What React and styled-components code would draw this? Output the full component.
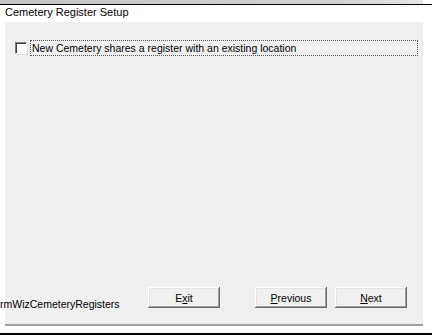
import React, { useState } from "react";
import styled, { createGlobalStyle } from "styled-components";

const GlobalStyle = createGlobalStyle`
  html, body {
    margin: 0;
    padding: 0;
    background: #ffffff;
  }
  body {
    font-family: "Liberation Sans", Arial, sans-serif;
    font-size: 10.5px;
    color: #000;
  }
`;

const Window = styled.div`
  width: 432px;
  height: 335px;
  display: flex;
  flex-direction: column;
  overflow: hidden;
  background: #ffffff;
`;

const TopStrip = styled.div`
  width: 423px;
  height: 4px;
  background: linear-gradient(to right, #c4c4c4, #d2d2d2 80%, #e6e6e6);
`;

const Rule = styled.div`
  width: 432px;
  height: ${({ thick }) => (thick ? "2px" : "1px")};
  background: #000000;
`;

const Title = styled.div`
  height: 17px;
  line-height: 15px;
  padding-left: 5px;
  font-size: 11px;
`;

const Panel = styled.div`
  margin-left: 5px;
  width: 418px;
  height: 302px;
  background: #f0f0f0;
  border-bottom: 2px solid #a0a0a0;
  display: flex;
  flex-direction: column;
`;

const CheckRow = styled.label`
  display: flex;
  align-items: center;
  margin-top: 18px;
  padding-left: 10px;
  gap: 3px;
  cursor: default;
`;

const Box = styled.span`
  width: 10px;
  height: 10px;
  box-sizing: content-box;
  background: #ffffff;
  border-top: 1px solid #808080;
  border-left: 1px solid #808080;
  border-right: 1px solid #ffffff;
  border-bottom: 1px solid #ffffff;
  box-shadow: inset 1px 1px 0 #404040, 1px 1px 0 #dcdcdc;
  flex: none;
  display: flex;
  align-items: center;
  justify-content: center;
  font-size: 9px;
  line-height: 1;
`;

const Focus = styled.span`
  flex: 1;
  margin-right: 5px;
  height: 14px;
  line-height: 14px;
  padding-left: 1px;
  border: 1px dotted #555;
`;

const Spacer = styled.div`
  flex: 1;
`;

const Footer = styled.div`
  display: flex;
  align-items: flex-start;
  height: 37px;
`;

const FormName = styled.div`
  margin-left: -5px;
  width: 148px;
  padding-top: 10px;
  line-height: 14px;
`;

const Button = styled.button`
  width: 72px;
  height: 21px;
  margin-left: ${({ gap }) => gap}px;
  padding: 0;
  background: #f0f0f0;
  font-family: "Liberation Sans", Arial, sans-serif;
  font-size: 10.5px;
  color: #000;
  border: none;
  box-shadow: inset -1px -1px 0 #696969, inset 1px 1px 0 #ffffff,
    inset -2px -2px 0 #a0a0a0, inset 2px 2px 0 #e3e3e3;
  cursor: default;

  u {
    text-decoration: underline;
  }
`;

export default function App() {
  const [shared, setShared] = useState(false);

  return (
    <Window>
      <GlobalStyle />
      <TopStrip />
      <Rule />
      <Title>Cemetery Register Setup</Title>
      <Panel>
        <CheckRow onClick={() => setShared(!shared)}>
          <Box>{shared ? "✓" : ""}</Box>
          <Focus>New Cemetery shares a register with an existing location</Focus>
        </CheckRow>
        <Spacer />
        <Footer>
          <FormName>rmWizCemeteryRegisters</FormName>
          <Button gap={0}>
            E<u>x</u>it
          </Button>
          <Button gap={35}>
            <u>P</u>revious
          </Button>
          <Button gap={8}>
            <u>N</u>ext
          </Button>
        </Footer>
      </Panel>
      <Spacer />
      <Rule thick />
    </Window>
  );
}
